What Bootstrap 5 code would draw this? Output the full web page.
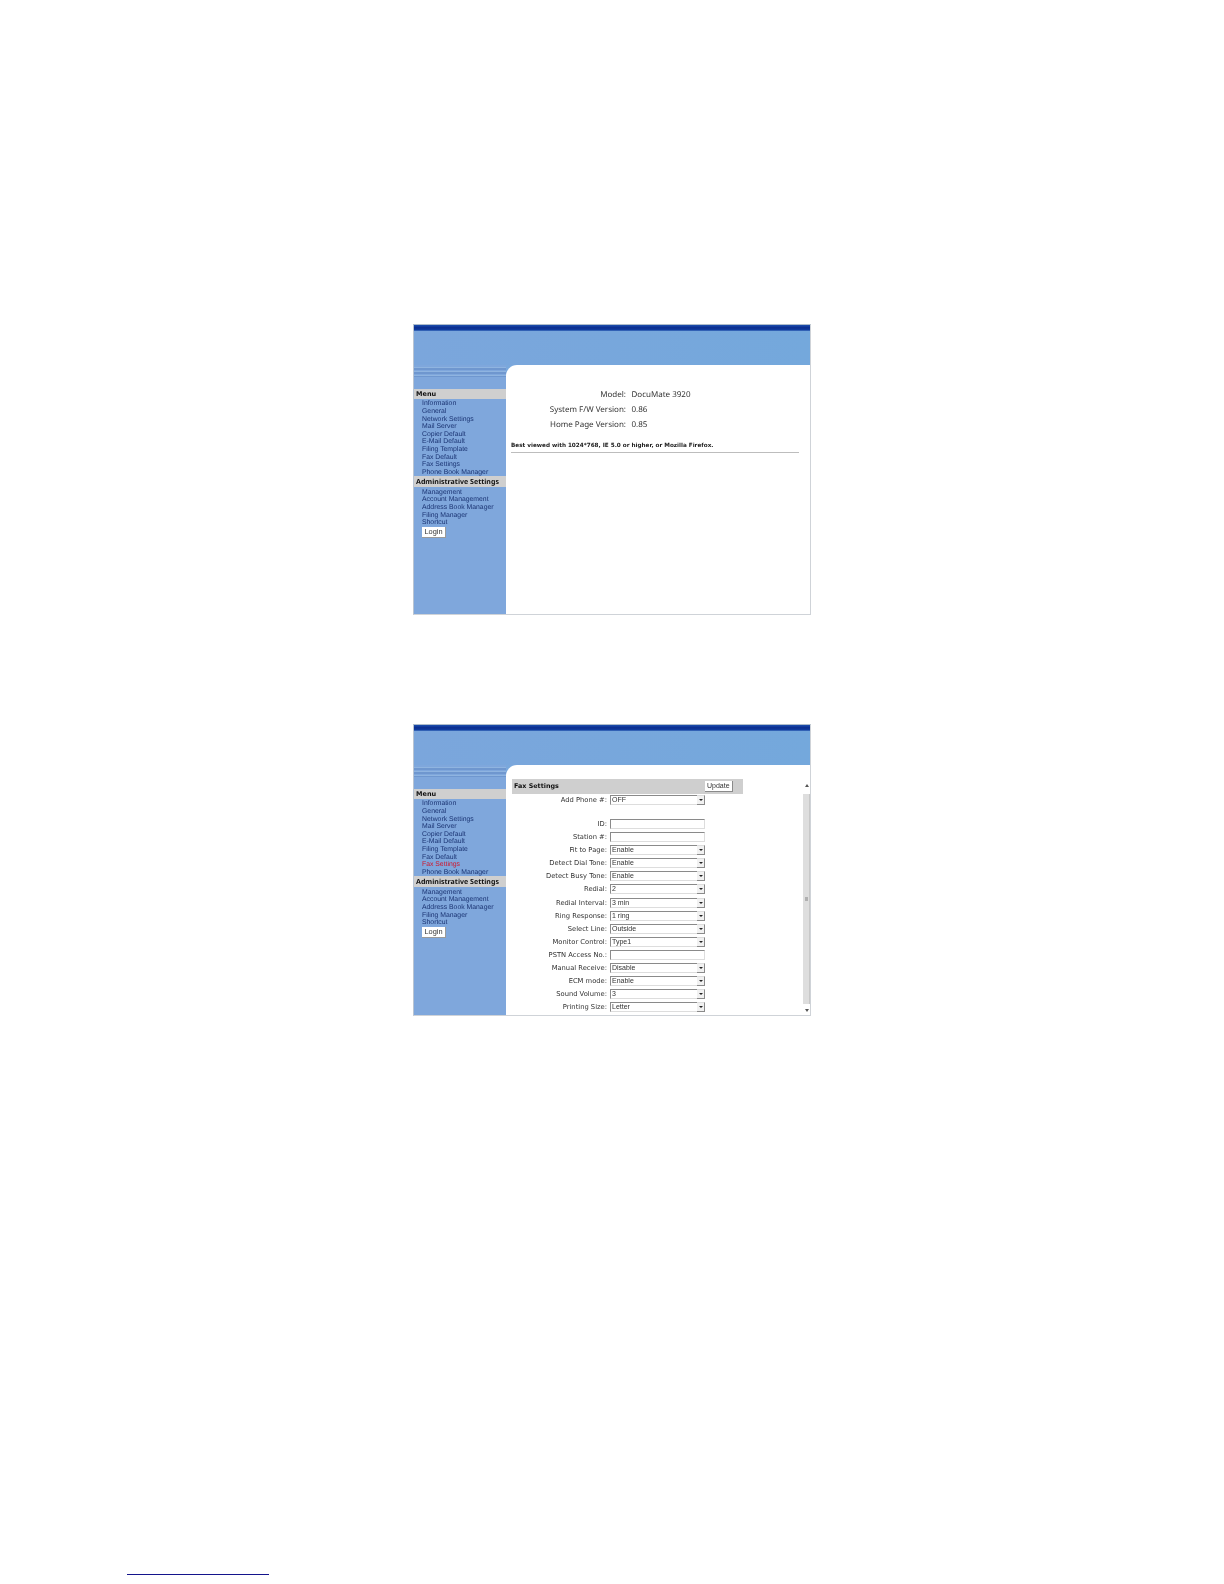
<!DOCTYPE html>
<html lang="en">
<head>
<meta charset="utf-8">
<title>DocuMate 3920</title>
<link href="https://cdn.jsdelivr.net/npm/bootstrap@5.3.0/dist/css/bootstrap.min.css" rel="stylesheet">
<style>
html,body{background:#fff;margin:0;padding:0}
.sheet{width:1224px;height:1584px;padding-top:324px;overflow:hidden;font-family:"DejaVu Sans","Liberation Sans",sans-serif;color:#333;text-rendering:geometricPrecision}
.shot{width:398px;margin-left:413px;border:1px solid #cfd3d8;border-top-color:#aebccb;border-left-color:#b9c4d2;overflow:hidden;background:#7aa8dc;filter:blur(.3px)}
.shot-a{height:291px}
.shot-b{height:292px;margin-top:109px}
.topbar{height:6px;background:linear-gradient(#1d4fae,#0a2c8f 45%,#0f3c9e 80%,#4a7cc6)}
.banner{height:34px;background:linear-gradient(90deg,#7ba6dc,#74a8dc)}
.body-wrap{min-height:0}
.side{width:92px;flex:0 0 92px;background:#7fa7dc}
.stripes{height:10px;margin-top:2px;margin-bottom:12px;background:repeating-linear-gradient(#8fb4e0 0 1px,#6f97cf 1px 3px,#7fa7dc 3px 4px)}
.sec-head{background:#cfcfcf;font-weight:700;font-size:6.5px;line-height:10.4px;color:#111;padding-left:2px;white-space:nowrap}
.sec-admin{font-family:"Noto Sans","DejaVu Sans",sans-serif;font-size:7.05px;line-height:10px;padding-top:1px}
.menu-list{padding:0 0 0 8px;margin:0;list-style:none;font-family:"Liberation Sans","DejaVu Sans",sans-serif;font-size:6.85px;line-height:7.6px;color:#1a3372;white-space:nowrap}
.menu-list.first{padding-top:1px}
.menu-list.second{padding-top:1.6px;line-height:7.55px}
.menu-on{color:#d0142a}
.login-btn{display:block;margin:.5px 0 0 8px;width:24px;height:11px;background:#fff;border:0;border-right:1px solid #9a9a9a;border-bottom:1px solid #9a9a9a;padding:0;font-family:"Liberation Sans","DejaVu Sans",sans-serif;font-size:7.4px;line-height:10px;color:#333}
.pane{background:#fff;border-top-left-radius:11px;position:relative;min-width:0}
.info-row{height:15.2px;line-height:15.2px;font-family:"Noto Sans","DejaVu Sans",sans-serif;font-size:8px;color:#333;white-space:nowrap}
.info-key{width:120px;text-align:right;flex:0 0 120px;margin-right:5.5px}
.info-box{padding-top:22px}
.best{font-size:5.7px;font-weight:700;line-height:8px;margin:9.8px 0 0 5px;color:#222;white-space:nowrap}
.rule{height:1px;background:#bdbdbd;margin:1.5px 11px 0 4.5px}
.fax-scroll{padding:14.3px 0 0 6px;width:296px}
.fax-title{width:231px;height:14.4px;background:#cfcfcf;font-weight:700;font-size:6.4px;line-height:14.4px;color:#111;padding-left:2px;position:relative}
.upd-btn{position:absolute;left:192.5px;top:1.4px;width:28.5px;height:11.6px;background:#fff;border:0;border-right:1px solid #8a8a8a;border-bottom:1px solid #8a8a8a;font-family:"Liberation Sans","DejaVu Sans",sans-serif;font-size:7px;line-height:10px;padding:0;font-weight:400;color:#333}
.fax-row{height:13.12px;font-size:6.75px;color:#333;white-space:nowrap}
.fax-gap{margin-top:10.6px}
.fax-key{width:95px;flex:0 0 95px;text-align:right;margin-right:3px}
.sel-wrap{position:relative;width:95px;height:10px}
.sel-box{display:block;width:95px;height:10px;appearance:none;-webkit-appearance:none;border:0;border-top:1px solid #8a8a8a;border-left:1px solid #8a8a8a;border-right:1px solid #ddd;border-bottom:1px solid #ddd;background:#fff;font:7px/8px "Liberation Sans","DejaVu Sans",sans-serif;padding:0 0 0 1px;color:#333;border-radius:0;outline:0}
.sel-arrow{position:absolute;right:0;top:0;width:8px;height:10px;background:#f1f1f1;border-right:1px solid #8a8a8a;border-bottom:1px solid #8a8a8a;border-top:1px solid #ddd}
.sel-arrow::after{content:"";position:absolute;left:2px;top:3px;border:2px solid transparent;border-top:2.5px solid #222;border-bottom:0}
.txt-box{display:block;width:95px;height:10px;border:0;border-top:1px solid #8a8a8a;border-left:1px solid #8a8a8a;border-right:1px solid #ddd;border-bottom:1px solid #ddd;padding:0;background:#fff;outline:0}
.scrollrail{position:absolute;left:297px;top:17px;width:7px;bottom:0;background:#fff}
.rail-up{position:absolute;left:2px;top:2px;border:2px solid transparent;border-bottom:3px solid #555;border-top:0}
.rail-thumb{position:absolute;left:0;top:12px;width:7px;height:210px;background:#dedede;border-right:1px solid #c8c8c8}
.rail-grip{position:absolute;left:2px;top:103px;width:3px;height:4px;background:#b0b0b0}
.rail-down{position:absolute;left:2px;top:227px;border:2px solid transparent;border-top:3px solid #555;border-bottom:0}
.foot-rule{width:142px;height:1px;background:#14148c;margin:558px 0 0 127px}
</style>
</head>
<body>
<div class="sheet">

  <div class="shot shot-a d-flex flex-column">
    <div class="topbar"></div>
    <div class="banner"></div>
    <div class="body-wrap d-flex flex-grow-1">
      <div class="side">
        <div class="stripes"></div>
        <div class="sec-head">Menu</div>
        <ul class="menu-list first">
          <li>Information</li><li>General</li><li>Network Settings</li><li>Mail Server</li><li>Copier Default</li><li>E-Mail Default</li><li>Filing Template</li><li>Fax Default</li><li>Fax Settings</li><li>Phone Book Manager</li>
        </ul>
        <div class="sec-head sec-admin">Administrative Settings</div>
        <ul class="menu-list second">
          <li>Management</li><li>Account Management</li><li>Address Book Manager</li><li>Filing Manager</li><li>Shortcut</li>
        </ul>
        <button class="login-btn" type="button">Login</button>
      </div>
      <div class="pane flex-grow-1">
        <div class="info-box">
          <div class="info-row d-flex"><div class="info-key">Model:</div><div>DocuMate 3920</div></div>
          <div class="info-row d-flex"><div class="info-key">System F/W Version:</div><div>0.86</div></div>
          <div class="info-row d-flex"><div class="info-key">Home Page Version:</div><div>0.85</div></div>
        </div>
        <div class="best">Best viewed with 1024*768, IE 5.0 or higher, or Mozilla Firefox.</div>
        <div class="rule"></div>
      </div>
    </div>
  </div>

  <div class="shot shot-b d-flex flex-column">
    <div class="topbar"></div>
    <div class="banner"></div>
    <div class="body-wrap d-flex flex-grow-1">
      <div class="side">
        <div class="stripes"></div>
        <div class="sec-head">Menu</div>
        <ul class="menu-list first">
          <li>Information</li><li>General</li><li>Network Settings</li><li>Mail Server</li><li>Copier Default</li><li>E-Mail Default</li><li>Filing Template</li><li>Fax Default</li><li class="menu-on">Fax Settings</li><li>Phone Book Manager</li>
        </ul>
        <div class="sec-head sec-admin">Administrative Settings</div>
        <ul class="menu-list second">
          <li>Management</li><li>Account Management</li><li>Address Book Manager</li><li>Filing Manager</li><li>Shortcut</li>
        </ul>
        <button class="login-btn" type="button">Login</button>
      </div>
      <div class="pane flex-grow-1">
        <div class="fax-scroll">
          <div class="fax-title">Fax Settings<button class="upd-btn" type="button">Update</button></div>
          <div class="fax-row d-flex align-items-center"><div class="fax-key">Add Phone #:</div><div class="sel-wrap"><select class="sel-box"><option>OFF</option></select><span class="sel-arrow"></span></div></div>
          <div class="fax-row fax-gap d-flex align-items-center"><div class="fax-key">ID:</div><input class="txt-box" type="text"></div>
          <div class="fax-row d-flex align-items-center"><div class="fax-key">Station #:</div><input class="txt-box" type="text"></div>
          <div class="fax-row d-flex align-items-center"><div class="fax-key">Fit to Page:</div><div class="sel-wrap"><select class="sel-box"><option>Enable</option></select><span class="sel-arrow"></span></div></div>
          <div class="fax-row d-flex align-items-center"><div class="fax-key">Detect Dial Tone:</div><div class="sel-wrap"><select class="sel-box"><option>Enable</option></select><span class="sel-arrow"></span></div></div>
          <div class="fax-row d-flex align-items-center"><div class="fax-key">Detect Busy Tone:</div><div class="sel-wrap"><select class="sel-box"><option>Enable</option></select><span class="sel-arrow"></span></div></div>
          <div class="fax-row d-flex align-items-center"><div class="fax-key">Redial:</div><div class="sel-wrap"><select class="sel-box"><option>2</option></select><span class="sel-arrow"></span></div></div>
          <div class="fax-row d-flex align-items-center"><div class="fax-key">Redial Interval:</div><div class="sel-wrap"><select class="sel-box"><option>3 min</option></select><span class="sel-arrow"></span></div></div>
          <div class="fax-row d-flex align-items-center"><div class="fax-key">Ring Response:</div><div class="sel-wrap"><select class="sel-box"><option>1 ring</option></select><span class="sel-arrow"></span></div></div>
          <div class="fax-row d-flex align-items-center"><div class="fax-key">Select Line:</div><div class="sel-wrap"><select class="sel-box"><option>Outside</option></select><span class="sel-arrow"></span></div></div>
          <div class="fax-row d-flex align-items-center"><div class="fax-key">Monitor Control:</div><div class="sel-wrap"><select class="sel-box"><option>Type1</option></select><span class="sel-arrow"></span></div></div>
          <div class="fax-row d-flex align-items-center"><div class="fax-key">PSTN Access No.:</div><input class="txt-box" type="text"></div>
          <div class="fax-row d-flex align-items-center"><div class="fax-key">Manual Receive:</div><div class="sel-wrap"><select class="sel-box"><option>Disable</option></select><span class="sel-arrow"></span></div></div>
          <div class="fax-row d-flex align-items-center"><div class="fax-key">ECM mode:</div><div class="sel-wrap"><select class="sel-box"><option>Enable</option></select><span class="sel-arrow"></span></div></div>
          <div class="fax-row d-flex align-items-center"><div class="fax-key">Sound Volume:</div><div class="sel-wrap"><select class="sel-box"><option>3</option></select><span class="sel-arrow"></span></div></div>
          <div class="fax-row d-flex align-items-center"><div class="fax-key">Printing Size:</div><div class="sel-wrap"><select class="sel-box"><option>Letter</option></select><span class="sel-arrow"></span></div></div>
        </div>
        <div class="scrollrail">
          <span class="rail-up"></span>
          <div class="rail-thumb"><div class="rail-grip"></div></div>
          <span class="rail-down"></span>
        </div>
      </div>
    </div>
  </div>

  <div class="foot-rule"></div>
</div>
<script src="https://cdn.jsdelivr.net/npm/bootstrap@5.3.0/dist/js/bootstrap.bundle.min.js"></script>
</body>
</html>
